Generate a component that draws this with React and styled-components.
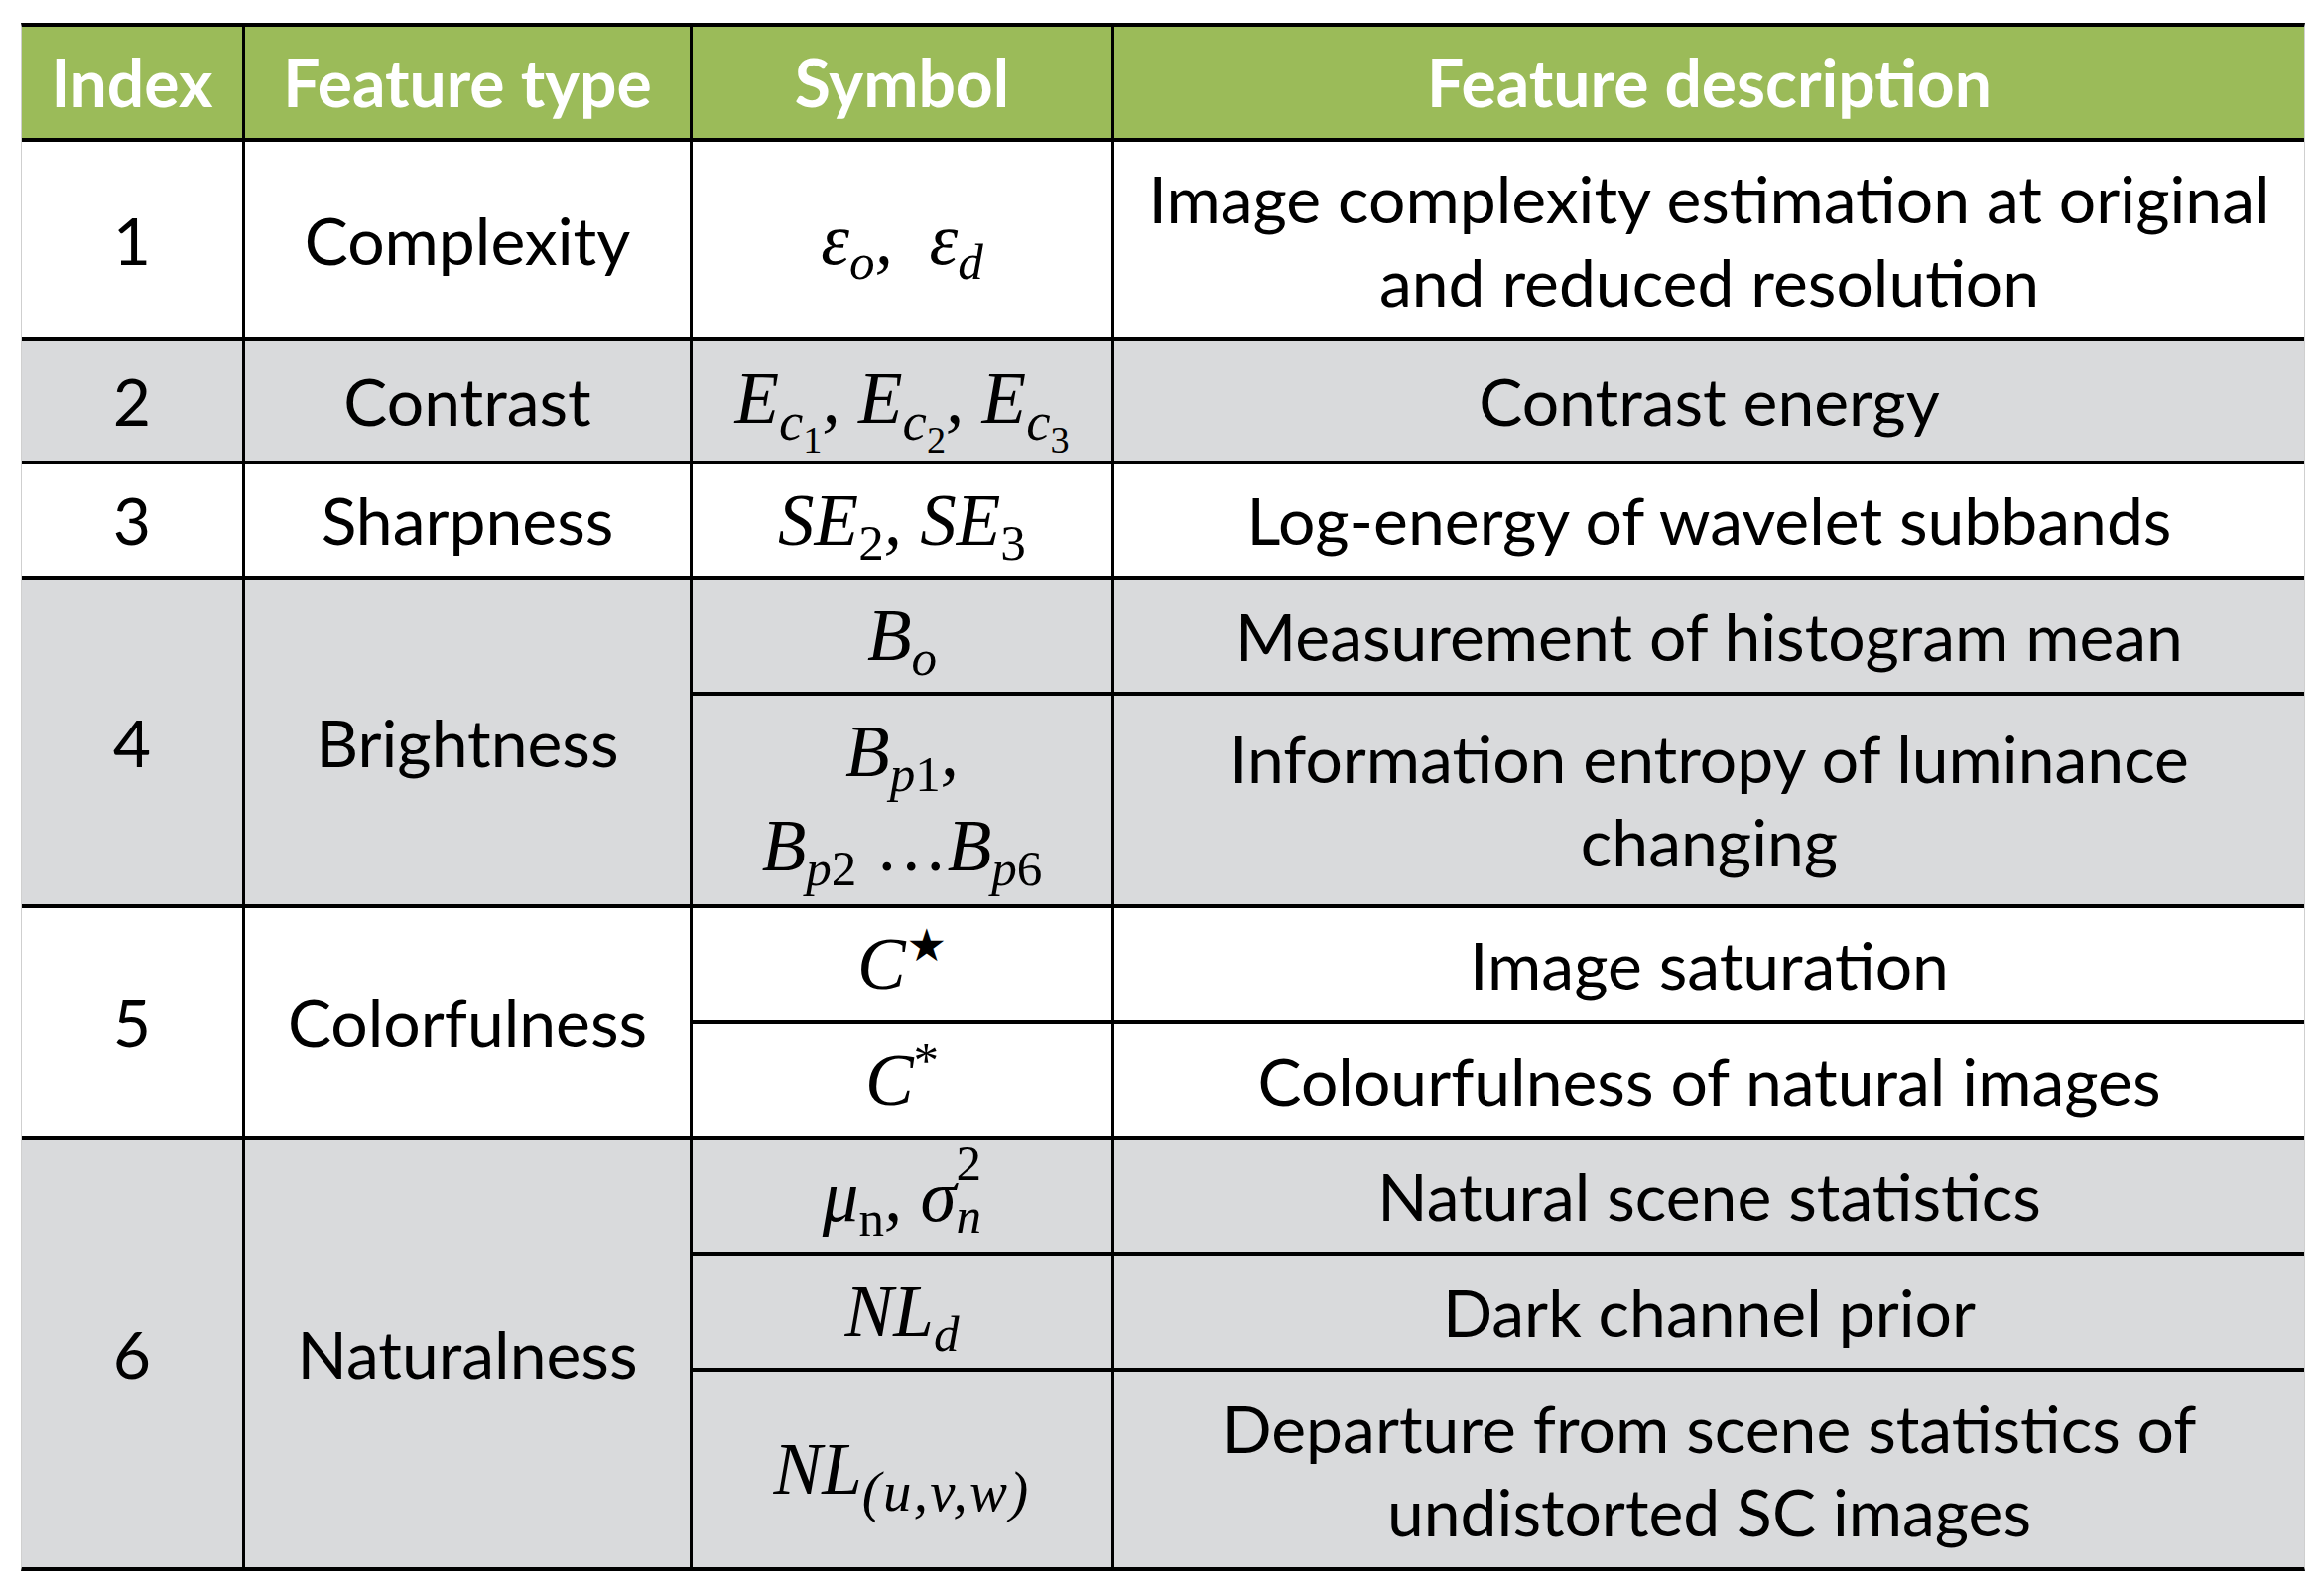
import React from 'react'
import styled, { createGlobalStyle } from 'styled-components'

const GlobalStyle = createGlobalStyle`
  html, body {
    margin: 0;
    padding: 0;
    background: #fff;
  }
  body {
    font-family: 'Lato', 'Open Sans', sans-serif;
    color: #000;
  }
`

const TONES = {
  head: '#9bbb59',
  light: '#ffffff',
  grey: '#d9dadc',
}

const Page = styled.div`
  padding: 23px 0 0 21px;
`

const Table = styled.div`
  display: grid;
  box-sizing: border-box;
  width: 2302px;
  grid-template-columns: 222px 448px 422px 1199px;
  grid-template-rows: 112px 197px 120px 112px 113px 210px 113px 113px 112px 113px 197px;
  column-gap: 3px;
  row-gap: 4px;
  background: #000;
  border-top: 4px solid #000;
  border-bottom: 4px solid #000;
  border-left: 1px solid #cfcfcf;
  border-right: 1px solid #cfcfcf;
`

const Cell = styled.div`
  display: flex;
  flex-direction: column;
  align-items: center;
  justify-content: center;
  text-align: center;
  background: ${({ $tone }) => TONES[$tone]};
  grid-row: ${({ $span }) => ($span ? `span ${$span}` : 'auto')};
  font-size: 66px;
  line-height: 84px;
  white-space: nowrap;
`

const HeadCell = styled(Cell)`
  color: #fff;
  font-weight: 700;
`

const Math = styled.span`
  font-family: 'Liberation Serif', 'DejaVu Serif', serif;
  font-style: italic;
  font-size: 73px;
  line-height: ${({ $lh }) => $lh || 1};
  white-space: nowrap;
`

const Sub = styled.sub`
  font-size: ${({ $size }) => $size || '0.7em'};
  line-height: 0;
  letter-spacing: ${({ $track }) => $track || 0};
  vertical-align: ${({ $drop }) => $drop || '-0.3em'};
  margin-left: ${({ $back }) => $back || 0};
`

const Sup = styled.sup`
  font-size: ${({ $size }) => $size || '0.7em'};
  line-height: 0;
  vertical-align: ${({ $lift }) => $lift || '0.55em'};
`

const Up = styled.span`
  font-style: normal;
`

const Star = styled.span`
  font-family: 'DejaVu Sans', sans-serif;
  font-style: normal;
  font-size: 0.62em;
  line-height: 0;
  vertical-align: 0.62em;
  margin-left: 0.02em;
`

export default function App () {
  return (
    <Page>
      <GlobalStyle />
      <Table>
        <HeadCell $tone="head">Index</HeadCell>
        <HeadCell $tone="head">Feature type</HeadCell>
        <HeadCell $tone="head">Symbol</HeadCell>
        <HeadCell $tone="head">Feature description</HeadCell>

        <Cell $tone="light">1</Cell>
        <Cell $tone="light">Complexity</Cell>
        <Cell $tone="light">
          <Math>ε<Sub>o</Sub>,&nbsp; ε<Sub>d</Sub></Math>
        </Cell>
        <Cell $tone="light">
          Image complexity estimation at original<br />and reduced resolution
        </Cell>

        <Cell $tone="grey">2</Cell>
        <Cell $tone="grey">Contrast</Cell>
        <Cell $tone="grey">
          <Math>
            E<Sub $size="0.75em">c<Sub $drop="-0.35em"><Up>1</Up></Sub></Sub>, E<Sub $size="0.75em">c<Sub $drop="-0.35em"><Up>2</Up></Sub></Sub>, E<Sub $size="0.75em">c<Sub $drop="-0.35em"><Up>3</Up></Sub></Sub>
          </Math>
        </Cell>
        <Cell $tone="grey">Contrast energy</Cell>

        <Cell $tone="light">3</Cell>
        <Cell $tone="light">Sharpness</Cell>
        <Cell $tone="light">
          <Math>SE<Sub><Up>2</Up></Sub>, SE<Sub><Up>3</Up></Sub></Math>
        </Cell>
        <Cell $tone="light">Log-energy of wavelet subbands</Cell>

        <Cell $tone="grey" $span={2}>4</Cell>
        <Cell $tone="grey" $span={2}>Brightness</Cell>
        <Cell $tone="grey">
          <Math>B<Sub>o</Sub></Math>
        </Cell>
        <Cell $tone="grey">Measurement of histogram mean</Cell>
        <Cell $tone="grey">
          <Math $lh={1.3}>B<Sub>p<Up>1</Up></Sub>,</Math>
          <Math $lh={1.3}>B<Sub>p<Up>2</Up></Sub> <Up>…</Up>B<Sub>p<Up>6</Up></Sub></Math>
        </Cell>
        <Cell $tone="grey">
          Information entropy of luminance<br />changing
        </Cell>

        <Cell $tone="light" $span={2}>5</Cell>
        <Cell $tone="light" $span={2}>Colorfulness</Cell>
        <Cell $tone="light">
          <Math>C<Star>★</Star></Math>
        </Cell>
        <Cell $tone="light">Image saturation</Cell>
        <Cell $tone="light">
          <Math>C<Sup><Up>*</Up></Sup></Math>
        </Cell>
        <Cell $tone="light">Colourfulness of natural images</Cell>

        <Cell $tone="grey" $span={3}>6</Cell>
        <Cell $tone="grey" $span={3}>Naturalness</Cell>
        <Cell $tone="grey">
          <Math>
            μ<Sub><Up>n</Up></Sub>, σ<Sup $lift="0.8em"><Up>2</Up></Sup><Sub $back="-0.5em" $drop="-0.25em">n</Sub>
          </Math>
        </Cell>
        <Cell $tone="grey">Natural scene statistics</Cell>
        <Cell $tone="grey">
          <Math>NL<Sub>d</Sub></Math>
        </Cell>
        <Cell $tone="grey">Dark channel prior</Cell>
        <Cell $tone="grey">
          <Math>NL<Sub $size="0.78em" $track="0.04em">(u,v,w)</Sub></Math>
        </Cell>
        <Cell $tone="grey">
          Departure from scene statistics of<br />undistorted SC images
        </Cell>
      </Table>
    </Page>
  )
}
